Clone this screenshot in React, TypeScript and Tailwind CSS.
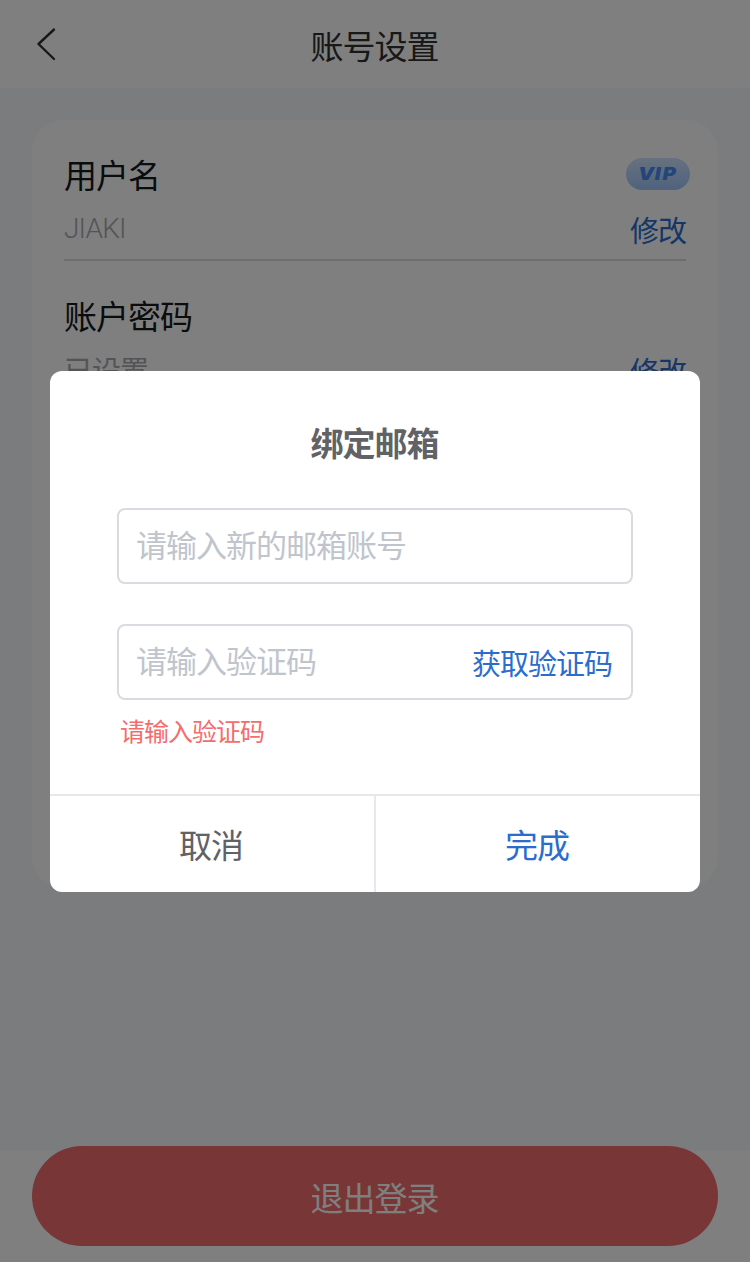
import React from "react";

const rows = [
  { title: "用户名", value: "JIAKI", valueClass: "font-light tracking-[-0.8px]", vip: true },
  { title: "账户密码", value: "已设置", valueClass: "pt-1.5 text-[29px] tracking-[-1px]", vip: false },
];

const VipBadge = () => {
  return (
    <div className="w-16 h-8 -mr-1 -mt-0.5 rounded-full bg-linear-to-b from-[#cfe4ff] to-[#9fc4fa] flex items-center justify-center">
      <svg width="64" height="24" viewBox="0 0 64 24">
        <text
          transform="scale(1.2 1)"
          x="10 24 30.500"
          y="18"
          fontSize="17"
          fontWeight="900"
          fontStyle="italic"
          fontFamily="Inter, sans-serif"
          fill="#468cf5"
        >
          VIP
        </text>
      </svg>
    </div>
  );
};

type RowProps = {
  title: string;
  value: string;
  valueClass: string;
  vip: boolean;
};

const SettingRow = ({ title, value, valueClass, vip }: RowProps) => {
  return (
    <div className="h-[141px] shrink-0 border-b-2 border-[#dcdde0]">
      <div className="h-[45px] mt-8 flex items-center justify-between">
        <span className="pt-1 text-[33px] tracking-[-1px] text-[#17181a]">{title}</span>
        {vip && <VipBadge />}
      </div>
      <div className="h-16 flex items-center justify-between text-[28px]">
        <span className={`text-[#a8a9ac] ${valueClass}`}>{value}</span>
        <button className="pt-[7px] text-[29px] tracking-[-1px] text-[#2a6dcf]">修改</button>
      </div>
    </div>
  );
};

const BindEmailDialog = () => {
  return (
    <div className="absolute inset-0 bg-black/50 flex items-center justify-center">
      <div className="w-[650px] h-[521px] bg-white rounded-xl overflow-hidden flex flex-col">
        <div className="flex-1 px-[67px]">
          <h2 className="mt-[49px] h-12 pr-px leading-[49px] text-center text-[33px] tracking-[-1px] font-bold text-[#606266]">
            绑定邮箱
          </h2>
          <input
            className="block mt-10 w-full h-[76px] px-[17px] pt-0.5 border-2 border-[#dadbe0] rounded-lg text-[31px] tracking-[-1px] outline-none placeholder:text-[#c0c4cc]"
            placeholder="请输入新的邮箱账号"
          />
          <div className="mt-10 w-full h-[76px] px-[17px] flex items-center border-2 border-[#dadbe0] rounded-lg">
            <input
              className="flex-1 min-w-0 pt-1 text-[31px] tracking-[-1px] outline-none placeholder:text-[#c0c4cc]"
              placeholder="请输入验证码"
            />
            <button className="shrink-0 pt-2 pr-0.5 text-[29px] tracking-[-1px] text-[#2a6dcf]">获取验证码</button>
          </div>
          <p className="mt-3 ml-[3px] h-10 leading-[42px] text-[25px] tracking-[-1px] text-[#f56c6c]">请输入验证码</p>
        </div>
        <div className="h-[98px] flex border-t-2 border-[#e8e8ea] text-[33px] tracking-[-1px]">
          <button className="w-[326px] pt-1.5 pr-0.5 border-r-2 border-[#e8e8ea] text-[#606266]">取消</button>
          <button className="flex-1 pt-1.5 pr-0.5 text-[#2a6dcf]">完成</button>
        </div>
      </div>
    </div>
  );
};

const App = () => {
  return (
    <div className="relative h-[1262px] overflow-hidden flex flex-col bg-white font-[Roboto,'Noto_Sans_CJK_SC',sans-serif]">
      <header className="h-[88px] shrink-0 grid grid-cols-[88px_1fr_88px] items-center">
        <svg className="ml-8" width="28" height="40" viewBox="0 0 28 40" fill="none">
          <path
            d="M22 5.500L6.500 20L22 35"
            stroke="#303133"
            strokeWidth="2.400"
            strokeLinecap="round"
            strokeLinejoin="round"
          />
        </svg>
        <h1 className="pt-[7px] pr-px text-center text-[33px] tracking-[-1px] text-[#303133]">账号设置</h1>
      </header>
      <main className="h-[1063px] shrink-0 bg-[#f7f9fc] p-8">
        <div className="h-[768px] px-8 bg-white rounded-[32px] flex flex-col">
          {rows.map((row) => (
            <SettingRow key={row.title} {...row} />
          ))}
        </div>
      </main>
      <footer className="relative -mt-[5px] px-8">
        <button className="w-full h-[100px] pt-2 pr-px rounded-full bg-[#f06c6c] text-[33px] tracking-[-1px] text-white">
          退出登录
        </button>
      </footer>
      <BindEmailDialog />
    </div>
  );
};

export default App;
